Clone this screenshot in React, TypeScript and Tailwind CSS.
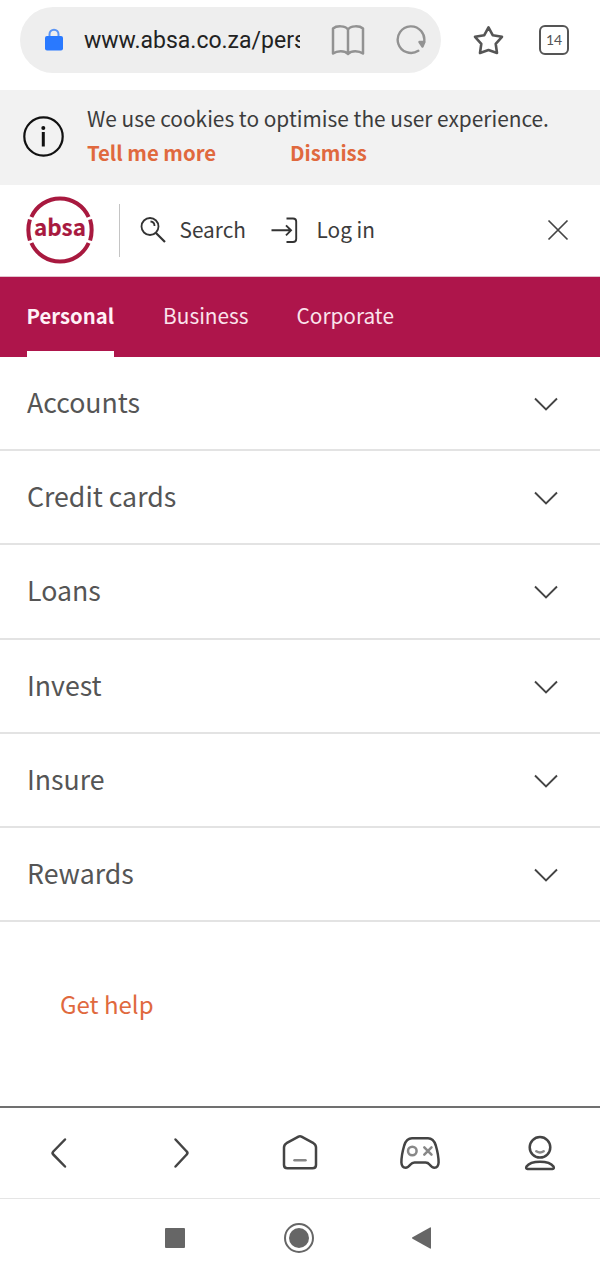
import React, { useState } from 'react';
const sections = ['Accounts', 'Credit cards', 'Loans', 'Invest', 'Insure', 'Rewards'];
const tabs = [{
  name: 'Personal',
  spacing: 'mr-[49px]'
}, {
  name: 'Business',
  spacing: 'mr-[48px]'
}, {
  name: 'Corporate',
  spacing: ''
}];
const AddressBar: React.FC = () => {
  return <div className="flex h-[90px] shrink-0 pt-[7px] pl-5">
      <div className="flex items-center w-[421px] h-[66px] rounded-full bg-[#eeeeee] pl-[25px]">
        <svg className="w-[18px] h-6 shrink-0" viewBox="0 0 18 24" fill="none">
          <path d="M4.500 10V6.200a4.500 4.500 0 0 1 9 0V10" stroke="#5b95f5" strokeWidth="2" />
          <rect y="8" width="18" height="14.500" rx="2" fill="#2979ff" />
        </svg>
        <div className="ml-[21px] mt-[2px] w-[216px] overflow-hidden whitespace-nowrap font-[Roboto,sans-serif] text-[23px] leading-8 text-[#222222]">
          www.absa.co.za/pers
        </div>
        <svg className="ml-[31px] w-[34px] h-[32px] shrink-0" viewBox="0 0 34 32" fill="none" stroke="#929292" strokeWidth="2.500" strokeLinejoin="round">
          <path d="M17 5.500C14.500 1.500 5.500 1.500 2 4.500V29.500C6 26.500 13.500 26 17 30C20.500 26 28 26.500 32 29.500V4.500C28.500 1.500 19.500 1.500 17 5.500V29" />
        </svg>
        <svg className="ml-[30px] w-8 h-8 shrink-0" viewBox="0 0 32 32" fill="none" stroke="#929292" strokeWidth="2.400" strokeLinecap="round" strokeLinejoin="round">
          <path d="M23.300 26.800A13.300 13.300 0 1 1 29 18.500" />
          <path d="M24.500 18L27.500 22.500L29.300 18Z" fill="#929292" />
        </svg>
      </div>
      <svg className="ml-[31px] mt-[17px] w-8 h-8" viewBox="0 0 32 32" fill="none" stroke="#555555" strokeWidth="2.600" strokeLinejoin="round">
        <path d="M16.500 3.300L20.700 11.200L30 12.800L23.700 19.800L25 29L16.500 26L8 29L9.300 19.800L3 12.800L12.300 11.200Z" />
      </svg>
      <div className="ml-[35px] mt-[18px] flex items-center justify-center w-[30px] h-[30px] rounded-[6px] border-[2.5px] border-[#555555] font-[Lato,sans-serif] text-[14px] leading-none text-[#555555]">
        14
      </div>
    </div>;
};
const CookieBanner: React.FC = () => {
  return <div className="flex h-[95px] shrink-0 bg-[#f2f2f2] pl-[23px] pt-[13px]">
      <svg className="mt-[13px] w-[41px] h-[41px] shrink-0" viewBox="0 0 41 41" fill="none" stroke="#111111">
        <circle cx="20.500" cy="20.500" r="19.200" strokeWidth="2.200" />
        <path d="M20.300 16V30.500" strokeWidth="3" />
        <circle cx="20.300" cy="12" r="2" fill="#111111" stroke="none" />
      </svg>
      <div className="ml-[23px] whitespace-nowrap">
        <p className="text-[20.87px] leading-[30px] text-[#3c3c3c]">We use cookies to optimise the user experience.</p>
        <div className="flex mt-[4px] text-[20.35px] leading-[30px] font-bold text-[#e0693e]">
          <a className="w-[203px]">Tell me more</a>
          <a>Dismiss</a>
        </div>
      </div>
    </div>;
};
const Header: React.FC = () => {
  return <div className="flex items-center h-[92px] shrink-0 border-b border-[#e3c3ce] pb-px pl-[25.5px] text-[20.8px] text-[#3c3c3c] whitespace-nowrap">
      <svg className="w-[68px] h-[68px] shrink-0" viewBox="0 0 68 68" fill="none" stroke="#a8193f" strokeWidth="4">
        <path d="M5.400 21A31.300 31.300 0 0 1 62.600 21" />
        <path d="M5.400 47A31.300 31.300 0 0 0 62.600 47" />
        <path d="M3.900 23.500Q0.800 34 3.900 44.500" />
        <path d="M64.100 23.500Q67.200 34 64.100 44.500" />
        <text x="34" y="40" textAnchor="middle" textLength="52" lengthAdjust="spacingAndGlyphs" fontSize="23" fontWeight="bold" fontFamily="'Noto Sans CJK SC', sans-serif" fill="#a8193f" strokeWidth="0.200">absa</text>
      </svg>
      <div className="ml-[25px] w-px h-[53px] bg-[#c4c4c4]" />
      <svg className="ml-5 w-[27px] h-[27px] shrink-0" viewBox="0 0 27 27" fill="none" stroke="#333333" strokeWidth="1.800">
        <circle cx="10" cy="9.500" r="8.500" />
        <path d="M16 16L25 25" strokeWidth="2.200" />
        <path d="M10.500 4.500C13 4.700 14.500 6.500 14.500 9" />
      </svg>
      <span className="ml-[13px] w-[66px] -mt-px">Search</span>
      <svg className="ml-[25px] w-[27px] h-[27px] shrink-0" viewBox="0 0 27 27" fill="none" stroke="#333333" strokeWidth="1.900">
        <path d="M15.500 1.500H22Q25.200 1.500 25.200 4.500V22Q25.200 25 22 25H15.500M0.500 13.300H20M15 8.300L20 13.300L15 18.300" />
      </svg>
      <span className="ml-[19px] w-[58px] -mt-px">Log in</span>
      <svg className="ml-auto mr-[31px] w-[22px] h-[22px]" viewBox="0 0 22 22" stroke="#444444" strokeWidth="1.700">
        <path d="M1.500 1.500L20.500 20.500M20.500 1.500L1.500 20.500" />
      </svg>
    </div>;
};
const BottomBar: React.FC = () => {
  return <div className="flex justify-around items-center h-[92px] shrink-0 border-t-2 border-[#707070]">
      <svg className="w-10 h-10" viewBox="0 0 40 40" fill="none" stroke="#444444" strokeWidth="2.500" strokeLinecap="round" strokeLinejoin="round">
        <path d="M25 6.500L13.300 18.500Q11.800 20 13.300 21.500L25 33.500" />
      </svg>
      <svg className="w-10 h-10" viewBox="0 0 40 40" fill="none" stroke="#444444" strokeWidth="2.500" strokeLinecap="round" strokeLinejoin="round">
        <path d="M15.500 6.500L26.700 18.500Q28.200 20 26.700 21.500L15.500 33.500" />
      </svg>
      <svg className="w-10 h-10" viewBox="0 0 40 40" fill="none" stroke="#444444" strokeWidth="2.500" strokeLinecap="round" strokeLinejoin="round">
        <path d="M18.500 3.700Q20 2.900 21.500 3.700L33.500 10.200Q36 11.700 36 14.500V32Q36 35.300 32.500 35.300H7.500Q4 35.300 4 32V14.500Q4 11.700 6.500 10.200Z" />
        <path d="M14.500 27.300H25.500" stroke="#888888" />
      </svg>
      <svg className="w-10 h-10" viewBox="0 0 40 40" fill="none" stroke="#444444" strokeWidth="2.500" strokeLinecap="round" strokeLinejoin="round">
        <path d="M12 5.300H28Q33.500 5.300 35.800 12.500Q38.600 22 38.600 29.500Q38.300 34.700 34.500 34.700Q32 34.700 29.500 31.500Q28 29.500 25.500 29.500H14.500Q12 29.500 10.500 31.500Q8 34.700 5.500 34.700Q1.700 34.700 1.400 29.500Q1.400 22 4.200 12.500Q6.500 5.300 12 5.300Z" />
        <circle cx="12.300" cy="18" r="4.300" stroke="#888888" />
        <path d="M24.300 14.300L31.500 21.700M31.500 14.300L24.300 21.700" stroke="#888888" />
      </svg>
      <svg className="w-10 h-10" viewBox="0 0 40 40" fill="none" stroke="#444444" strokeWidth="2.500" strokeLinecap="round" strokeLinejoin="round">
        <circle cx="20" cy="14.300" r="10.300" />
        <path d="M16.300 18.300Q20 20.800 23.700 18.300" stroke="#888888" />
        <path d="M7.500 36Q5.500 36 6.500 33.500C11 27 29 27 33.500 33.500Q34.500 36 32.500 36Z" />
      </svg>
    </div>;
};
const SystemBar: React.FC = () => {
  return <div className="flex items-center h-[80px] shrink-0 border-t border-[#e5e5e5] pb-px pl-[165px]">
      <div className="w-5 h-5 rounded-[1px] bg-[#666666]" />
      <div className="ml-[99px] flex items-center justify-center w-[30px] h-[30px] rounded-full border-2 border-[#666666]">
        <div className="w-5 h-5 rounded-full bg-[#666666]" />
      </div>
      <svg className="ml-[98px] w-[19px] h-[22px]" viewBox="0 0 19 22" fill="#666666">
        <path d="M18 0.500Q19 0 19 1V21Q19 22 18 21.500L0.500 11.700Q-0.500 11 0.500 10.300Z" />
      </svg>
    </div>;
};
const App: React.FC = () => {
  const [activeTab, setActiveTab] = useState('Personal');
  return <div className="flex flex-col w-[600px] h-[1278px] overflow-hidden bg-white font-['Noto_Sans_CJK_SC',sans-serif]">
      <AddressBar />
      <CookieBanner />
      <Header />
      <nav className="flex h-[80px] shrink-0 bg-[#ae154b] pl-[26.5px] text-[20.8px] text-[#fbe3ec]">
        {tabs.map(tab => <button key={tab.name} onClick={() => setActiveTab(tab.name)} className={`h-[80px] border-b-[6px] pt-[3px] whitespace-nowrap ${tab.spacing} ${activeTab === tab.name ? 'border-white font-bold text-[20.3px] text-[#fff1f6]' : 'border-transparent'}`}>
            {tab.name}
          </button>)}
      </nav>
      <ul className="flex flex-col shrink-0">
        {sections.map(section => <li key={section} className="flex items-center justify-between h-[94.2px] border-b-2 border-[#e3e3e3] pl-[27px] pr-[42px] text-[26.7px] text-[#555555]">
            <span className="-mt-[2px]">{section}</span>
            <svg className="mt-[2px] w-6 h-[14px]" viewBox="0 0 24 14" fill="none" stroke="#444444" strokeWidth="1.900">
              <path d="M1 1.500L12 12.500L23 1.500" />
            </svg>
          </li>)}
      </ul>
      <div className="grow pl-[60px] pt-[65px] text-[24px] leading-[34px] text-[#e0693e]">
        <a>Get help</a>
      </div>
      <BottomBar />
      <SystemBar />
    </div>;
};
export default App;
